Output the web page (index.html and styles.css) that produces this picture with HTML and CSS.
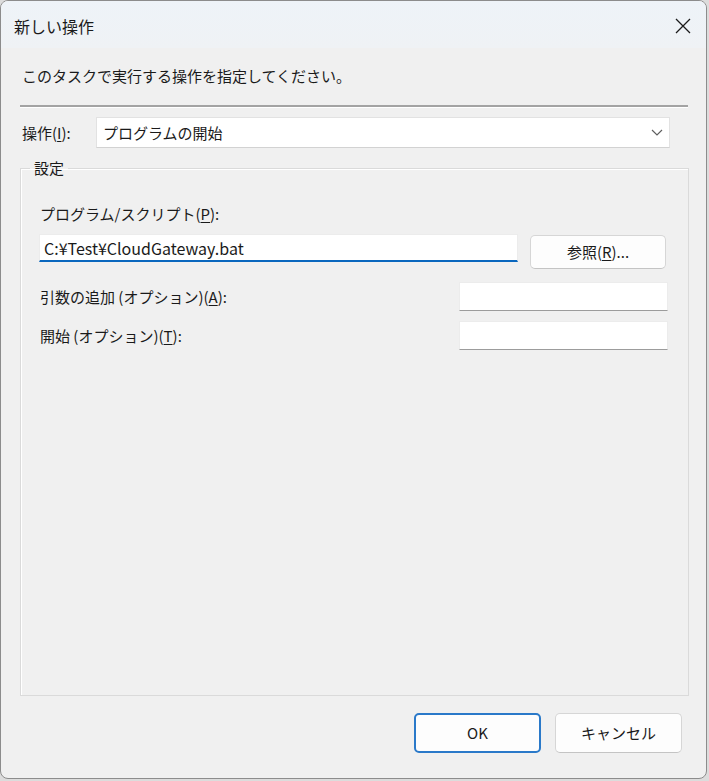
FILE: index.html
```html
<!DOCTYPE html>
<html lang="ja">
<head>
<meta charset="utf-8">
<title>新しい操作</title>
<link rel="stylesheet" href="styles.css">
</head>
<body>
<div class="window">
  <div class="titlebar">
    <span class="title">新しい操作</span>
    <span class="close" aria-label="閉じる">
      <svg width="16" height="16" viewBox="0 0 16 16"><path d="M1 1 L15 15 M15 1 L1 15" stroke="#1b1b1b" stroke-width="1.3" fill="none"/></svg>
    </span>
  </div>
  <div class="content">
    <p class="instruction">このタスクで実行する操作を指定してください。</p>
    <div class="separator"></div>
    <div class="combo-row">
      <span class="combo-label">操作(<u>I</u>):</span>
      <div class="combo">
        <span>プログラムの開始</span>
        <svg class="chev" width="12" height="7" viewBox="0 0 12 7"><path d="M1 1 L6 6 L11 1" stroke="#5f5f5f" stroke-width="1.2" fill="none"/></svg>
      </div>
    </div>
    <fieldset class="group">
      <legend>設定</legend>
      <div class="field-label">プログラム/スクリプト(<u>P</u>):</div>
      <div class="program-row">
        <div class="textbox focused">C:¥Test¥CloudGateway.bat</div>
        <div class="button browse">参照(<u>R</u>)...</div>
      </div>
      <div class="opt-row first">
        <span>引数の追加 (オプション)(<u>A</u>):</span>
        <div class="textbox small"></div>
      </div>
      <div class="opt-row">
        <span>開始 (オプション)(<u>T</u>):</span>
        <div class="textbox small"></div>
      </div>
    </fieldset>
  </div>
  <div class="footer">
    <div class="button ok">OK</div>
    <div class="button cancel">キャンセル</div>
  </div>
</div>
</body>
</html>
```
FILE: styles.css
```css
* { box-sizing: border-box; }
html, body {
  margin: 0;
  padding: 0;
  background: #dcdcdc;
}
body {
  width: 709px;
  height: 781px;
  font-family: "Noto Sans CJK JP", "Noto Sans", sans-serif;
  font-size: 15px;
  color: #1a1a1a;
}
u { text-decoration-thickness: 1px; text-underline-offset: 2px; }

.window {
  width: 707px;
  height: 779px;
  border: 1px solid #8c8c8c;
  border-radius: 8px;
  background: #f0f0f0;
  overflow: hidden;
  display: flex;
  flex-direction: column;
}
.titlebar {
  height: 47px;
  flex: none;
  display: flex;
  align-items: center;
  justify-content: space-between;
  padding: 2px 15px 0 13px;
  background: linear-gradient(#eef3f8, #eff2f5);
}
.title { font-size: 16px; line-height: 20px; }
.close { display: flex; width: 16px; height: 16px; }

.content {
  flex: 1;
  display: flex;
  flex-direction: column;
  padding: 0 18px 0 19px;
}
.instruction {
  margin: 18px 0 0 2px;
  line-height: 20px;
}
.separator {
  margin-top: 19px;
  height: 3px;
  border-top: 2px solid #a3a3a3;
  border-bottom: 1px solid #ffffff;
}
.combo-row {
  margin-top: 9px;
  display: flex;
  align-items: center;
  padding-left: 2px;
}
.combo-label { width: 74px; line-height: 20px; }
.combo {
  width: 574px;
  height: 31px;
  background: #ffffff;
  border: 1px solid #e2e2e2;
  border-bottom-color: #d2d2d2;
  display: flex;
  align-items: center;
  justify-content: space-between;
  padding: 0 6px 0 6px;
  line-height: 20px;
}

.group {
  flex: 1;
  margin: 10px 0 0 0;
  width: 669px;
  border: 1px solid #dadada;
  box-shadow: inset 1px 1px 0 #ffffff;
  padding: 0 20px 0 18px;
  min-width: 0;
}
.group legend {
  padding: 0 4px;
  margin-left: -9px;
  line-height: 20px;
}
.field-label {
  margin-top: 26px;
  line-height: 20px;
  padding-left: 1px;
}
.program-row {
  margin-top: 10px;
  display: flex;
  align-items: flex-start;
  gap: 12px;
}
.textbox {
  background: #ffffff;
  border: 1px solid #ececec;
  border-bottom: 1px solid #9c9c9c;
  line-height: 20px;
}
.textbox.focused {
  width: 479px;
  height: 28px;
  padding: 3px 4px 0 4px;
  font-size: 16px;
  border-bottom: 2px solid #0a67be;
}
.textbox.small {
  width: 209px;
  height: 29px;
}
.button {
  display: flex;
  align-items: center;
  justify-content: center;
  background: #fdfdfd;
  border: 1px solid #d6d6d6;
  border-bottom-color: #c4c4c4;
  border-radius: 5px;
  line-height: 20px;
}
.browse {
  margin-top: 1px;
  width: 136px;
  height: 34px;
}
.opt-row {
  display: flex;
  align-items: center;
  justify-content: space-between;
  margin-top: 10px;
  padding-left: 1px;
  line-height: 20px;
}
.opt-row.first { margin-top: 13px; }

.footer {
  flex: none;
  display: flex;
  justify-content: flex-end;
  gap: 14px;
  padding: 17px 24px 25px 0;
}
.ok, .cancel {
  width: 127px;
  height: 40px;
}
.ok {
  border: 2px solid #2a79c9;
}
```
